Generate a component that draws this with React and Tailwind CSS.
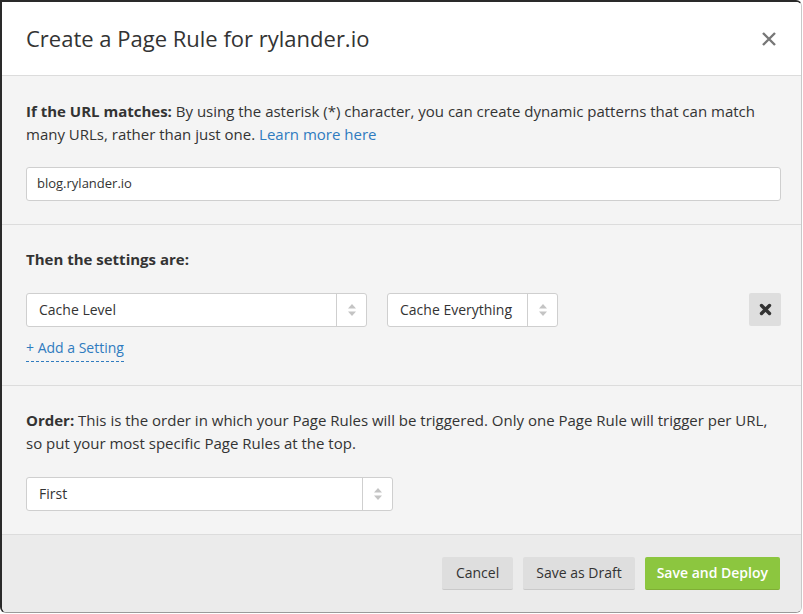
import React from 'react';

const Arrows = () => (
  <svg width="10" height="14" viewBox="0 0 10 14" className="text-[#c4c4c4]">
    <path d="M5 1 L9 5.5 H1 Z" fill="currentColor" />
    <path d="M5 13 L9 8.5 H1 Z" fill="currentColor" />
  </svg>
);

const Select = ({ value, width }) => (
  <div className={`flex h-[34px] ${width} items-stretch rounded-[3px] border border-[#cfcfcf] bg-white`}>
    <div className="flex flex-1 items-center px-3 pb-[2px] text-[14px] text-[#333]">{value}</div>
    <div className="flex w-[30px] items-center justify-center border-l border-[#cfcfcf]">
      <Arrows />
    </div>
  </div>
);

export default function App() {
  return (
    <div className="h-[614px] w-[803px] bg-white" style={{ fontFamily: '"Open Sans", sans-serif' }}>
      <div className="flex h-[613px] w-[802px] flex-col overflow-hidden rounded-tr-[6px] rounded-b-[6px] border-l-2 border-t-2 border-r border-b border-l-[#2a2a2a] border-t-[#2a2a2a] border-r-[#c8c8c8] border-b-[#9a9a9a] text-[#333]">
        <div className="flex h-[74px] items-center justify-between border-b border-[#dcdcdc] bg-white pl-6 pr-[24px]">
          <h1 className="text-[22px] font-normal text-[#333]">Create a Page Rule for rylander.io</h1>
          <svg width="16" height="16" viewBox="0 0 16 16" className="text-[#777]">
            <path d="M2 2 L14 14 M14 2 L2 14" stroke="currentColor" strokeWidth="2.4" />
          </svg>
        </div>

        <div className="border-b border-[#dcdcdc] bg-[#f4f4f4] pl-6 pr-[20px] pt-6 pb-[23px]">
          <p className="text-[15px] leading-[23px]">
            <span className="font-bold">If the URL matches:</span> By using the asterisk (*) character, you can create dynamic patterns that can match many URLs, rather than just one.{' '}
            <span className="text-[#2f7bbf]">Learn more here</span>
          </p>
          <div className="mt-[21px] flex h-[34px] items-center rounded-[3px] border border-[#cfcfcf] bg-white px-[10px] pb-[1px] text-[13px]">
            blog.rylander.io
          </div>
        </div>

        <div className="border-b border-[#dcdcdc] bg-[#f4f4f4] pl-6 pr-[20px] pt-[23px] pb-[26px]">
          <p className="text-[15px] font-bold leading-[23px]">Then the settings are:</p>
          <div className="mt-[22px] flex items-start">
            <Select value="Cache Level" width="w-[341px]" />
            <div className="ml-[20px]">
              <Select value="Cache Everything" width="w-[171px]" />
            </div>
            <div className="flex-1" />
            <button className="flex h-[33px] w-[32px] items-center justify-center rounded-[2px] bg-[#dedede] text-[#333]">
              <svg width="13" height="13" viewBox="0 0 13 13">
                <path d="M2.5 2.5 L10.5 10.5 M10.5 2.5 L2.5 10.5" stroke="currentColor" strokeWidth="3.4" strokeLinecap="round" />
              </svg>
            </button>
          </div>
          <div className="mt-[8px]">
            <span className="border-b border-dashed border-[#2f7bbf] pb-[4px] text-[14px] leading-[20px] text-[#2f7bbf]">+ Add a Setting</span>
          </div>
        </div>

        <div className="border-b border-[#dcdcdc] bg-[#f4f4f4] pl-6 pr-[20px] pt-[23px] pb-[23px]">
          <p className="text-[15px] leading-[23px]">
            <span className="font-bold">Order:</span> This is the order in which your Page Rules will be triggered. Only one Page Rule will trigger per URL, so put your most specific Page Rules at the top.
          </p>
          <div className="mt-[22px]">
            <Select value="First" width="w-[367px]" />
          </div>
        </div>

        <div className="flex flex-1 items-start justify-end gap-[10px] bg-[#ebebeb] pt-[22px] pr-[21px]">
          <button className="h-[33px] rounded-[2px] border-b border-[#c9c9c9] bg-[#dedede] px-[14px] pb-[1px] text-[14px] text-[#333]">Cancel</button>
          <button className="h-[33px] rounded-[2px] border-b border-[#c9c9c9] bg-[#dedede] px-[13px] pb-[1px] text-[14px] text-[#333]">Save as Draft</button>
          <button className="h-[33px] rounded-[2px] border-b border-[#7fae35] bg-[#8cc63f] px-[12px] pb-[1px] text-[14px] font-semibold text-white">Save and Deploy</button>
        </div>
      </div>
    </div>
  );
}
